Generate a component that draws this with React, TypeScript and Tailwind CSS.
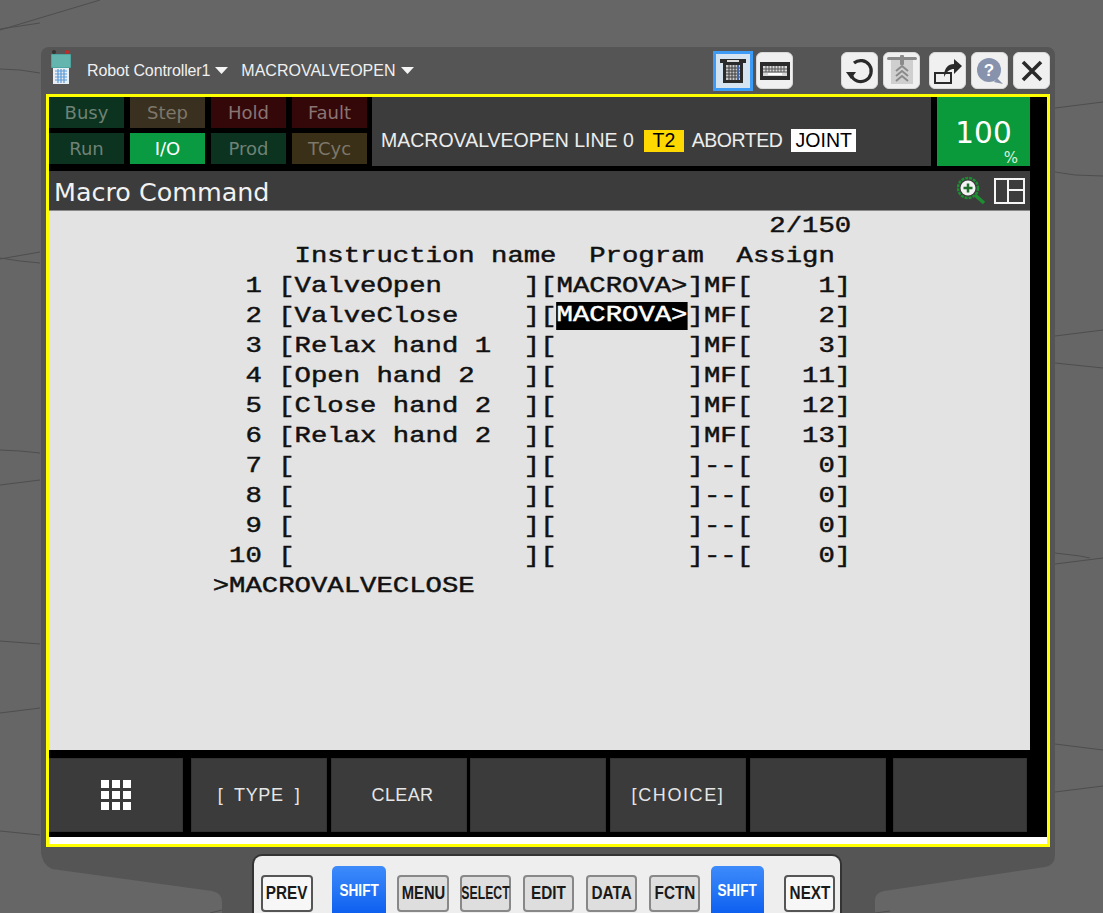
import React from "react";

const uiFont = "font-['DejaVu_Sans',sans-serif]";
const arial = "font-['Liberation_Sans',sans-serif]";

const lights = [
  { label: "Busy", cls: "bg-[#0b3320] text-[#6f8276]" },
  { label: "Step", cls: "bg-[#3a3020] text-[#7d776a]" },
  { label: "Hold", cls: "bg-[#340808] text-[#8a7472]" },
  { label: "Fault", cls: "bg-[#340808] text-[#8a7472]" },
  { label: "Run", cls: "bg-[#0b3320] text-[#6f8276]" },
  { label: "I/O", cls: "bg-[#0a9a42] text-white" },
  { label: "Prod", cls: "bg-[#0b3320] text-[#6f8276]" },
  { label: "TCyc", cls: "bg-[#3a3018] text-[#7d776a]" },
];

const softKeys = [
  { label: "", cls: "w-[134px]" },
  { label: "[  TYPE  ]", cls: "w-[136px] ml-[8px] tracking-[0.6px]" },
  { label: "CLEAR", cls: "w-[136px] ml-[4px] pl-[7px] tracking-[0.4px]" },
  { label: "", cls: "w-[136px] ml-[3px]" },
  { label: "[CHOICE]", cls: "w-[136px] ml-[4px] tracking-[1.6px]" },
  { label: "", cls: "w-[136px] ml-[4px]" },
  { label: "", cls: "w-[134px] ml-[7px]" },
];

const screenRows = [
  "                                            2/150",
  "               Instruction name  Program  Assign",
];

const tableRows = [
  { n: " 1", name: "ValveOpen     ", prog: "MACROVA>", mf: "MF", val: "    1" },
  { n: " 2", name: "ValveClose    ", prog: "MACROVA>", mf: "MF", val: "    2", active: true },
  { n: " 3", name: "Relax hand 1  ", prog: "        ", mf: "MF", val: "    3" },
  { n: " 4", name: "Open hand 2   ", prog: "        ", mf: "MF", val: "   11" },
  { n: " 5", name: "Close hand 2  ", prog: "        ", mf: "MF", val: "   12" },
  { n: " 6", name: "Relax hand 2  ", prog: "        ", mf: "MF", val: "   13" },
  { n: " 7", name: "              ", prog: "        ", mf: "--", val: "    0" },
  { n: " 8", name: "              ", prog: "        ", mf: "--", val: "    0" },
  { n: " 9", name: "              ", prog: "        ", mf: "--", val: "    0" },
  { n: "10", name: "              ", prog: "        ", mf: "--", val: "    0" },
];

function Wires() {
  const lines = [
    "0,30 100,0", "0,29 40,23", "0,69 20,70 40,73", "0,259 40,252", "0,258 20,261 40,263",
    "0,450 20,451 40,453", "0,485 40,480", "0,641 40,644", "0,713 40,708", "0,831 40,835",
    "1055,108 1103,102", "1055,172 1075,175 1103,176", "1055,336 1103,330", "1055,363 1103,368",
    "1055,553 1080,556 1090,558", "1055,564 1103,558", "1055,744 1103,750", "1055,792 1103,786",
    "210,913 222,910", "875,913 890,911",
  ];
  return (
    <svg className="absolute inset-0" width="1103" height="913">
      {lines.map((p) => (
        <polyline key={p} points={p} fill="none" stroke="#4e4e4e" strokeWidth="1" />
      ))}
      <path
        d="M41 850 Q41 864 52 869 L212 891 Q222 893 222 902 L222 913 L875 913 L875 900 Q875 893 884 891 L1045 867 Q1055 865 1055 855 L1055 840 L41 840 Z"
        fill="#555555"
      />
    </svg>
  );
}

function PendantIcon() {
  return (
    <svg width="24" height="36" viewBox="0 0 24 36">
      <circle cx="5" cy="3" r="2" fill="#333" />
      <circle cx="18" cy="3" r="2" fill="#c62828" />
      <rect x="2" y="5" width="20" height="14" rx="1" fill="#4fa6a0" />
      <rect x="3" y="6" width="18" height="12" fill="#63b5ae" />
      <rect x="4" y="19" width="16" height="16" fill="#e8eef2" />
      <path d="M6 22h12M6 25h12M6 28h12M6 31h12M9 20v14M12 20v14M15 20v14" stroke="#5b9bd8" strokeWidth="1.2" />
    </svg>
  );
}

function ToolButton({ children, selected }: { children?: React.ReactNode; selected?: boolean }) {
  if (selected) {
    return (
      <div className="flex h-[40px] w-[40px] items-center justify-center border-[3px] border-[#3d9bf5] bg-[#d5e4f0]">
        {children}
      </div>
    );
  }
  return (
    <div className="flex h-[37px] w-[37px] items-center justify-center rounded-[6px] border border-[#d8d8d8] bg-[#f0f0f0]">
      {children}
    </div>
  );
}

function Caret({ className }: { className?: string }) {
  return (
    <svg className={className} width="13" height="7" viewBox="0 0 13 7">
      <path d="M0 0h13L6.500 7z" fill="#f5f5f5" />
    </svg>
  );
}

function TopBar() {
  return (
    <div className="flex h-[47px] items-center">
      <div className="ml-[3px] mt-[-7px]">
        <PendantIcon />
      </div>
      <span className={`ml-[14px] text-[16px] tracking-[-0.12px] text-[#f0f0f0] ${arial}`}>Robot Controller1</span>
      <Caret className="ml-[5px]" />
      <span className={`ml-[13px] text-[16px] text-[#f0f0f0] ${arial}`}>MACROVALVEOPEN</span>
      <Caret className="ml-[6px]" />
      <div className="ml-auto flex items-center">
        <ToolButton selected>
          <svg width="30" height="30" viewBox="0 0 30 30">
            <path d="M2 3h26v4h-3v20H5V7H2z" fill="#2b2b2b" />
            <rect x="9" y="4" width="12" height="2" fill="#ddd" />
            <rect x="8" y="9" width="14" height="15" fill="#c9c9c9" />
            <path d="M8 12h14M8 15h14M8 18h14M8 21h14M11 9v15M14 9v15M17 9v15" stroke="#3a3a3a" strokeWidth="1" />
            <path d="M20 9v15" stroke="#3f66a8" strokeWidth="2" />
          </svg>
        </ToolButton>
        <div className="ml-[3px]">
          <ToolButton>
            <svg width="30" height="20" viewBox="0 0 30 20">
              <rect x="0" y="1" width="30" height="18" fill="#2b2b2b" />
              <rect x="3" y="5" width="24" height="10" fill="#d8d8d8" />
              <path d="M3 8h24M3 11h24M6 5v6M9 5v6M12 5v6M15 5v6M18 5v6M21 5v6M24 5v6" stroke="#555" strokeWidth="1" />
              <rect x="8" y="12" width="14" height="2" fill="#fff" />
            </svg>
          </ToolButton>
        </div>
        <div className="ml-[48px]">
          <ToolButton>
            <svg width="28" height="28" viewBox="0 0 28 28">
              <path d="M8 6 A10.500 10.500 0 1 1 5 18" fill="none" stroke="#2a2a2a" strokeWidth="3.200" />
              <path d="M0 15h10l-5 7z" fill="#2a2a2a" />
            </svg>
          </ToolButton>
        </div>
        <div className="ml-[5px]">
          <ToolButton>
            <svg width="30" height="32" viewBox="0 0 30 32">
              <rect x="4" y="3" width="22" height="26" fill="#cfcfcf" />
              <rect x="0" y="2" width="30" height="3" rx="1.500" fill="#8a8a8a" />
              <rect x="13" y="0" width="4" height="10" rx="1" fill="#8a8a8a" />
              <path d="M9 16l6-5 6 5M9 21l6-5 6 5M9 26l6-5 6 5" fill="none" stroke="#8a8a8a" strokeWidth="2" />
            </svg>
          </ToolButton>
        </div>
        <div className="ml-[9px]">
          <ToolButton>
            <svg width="30" height="30" viewBox="0 0 30 30">
              <path d="M2 17h16v10H2z" fill="none" stroke="#2a2a2a" strokeWidth="2" />
              <path d="M11 21C11 12 15 8 21 8V3l8 7-8 8v-5c-4 0-7 2-10 8z" fill="#2a2a2a" />
            </svg>
          </ToolButton>
        </div>
        <div className="ml-[5px]">
          <ToolButton>
            <svg width="30" height="30" viewBox="0 0 30 30">
              <circle cx="14" cy="14" r="12" fill="#8792ad" />
              <path d="M22 22l6 6-9-2z" fill="#8792ad" />
              <text x="14" y="20" textAnchor="middle" fontSize="17" fontWeight="700" fill="#fff" fontFamily="Liberation Sans">
                ?
              </text>
            </svg>
          </ToolButton>
        </div>
        <div className="ml-[5px]">
          <ToolButton>
            <svg width="24" height="24" viewBox="0 0 24 24">
              <path d="M3 3l18 18M21 3L3 21" stroke="#2a2a2a" strokeWidth="3.600" />
            </svg>
          </ToolButton>
        </div>
      </div>
    </div>
  );
}

function StatusRow() {
  return (
    <div className="flex h-[69px] pr-[17px]">
      <div className="grid grid-cols-[repeat(4,75px)] grid-rows-[31px_31px] gap-x-[6px] gap-y-[5px]">
        {lights.map((l) => (
          <div key={l.label} className={`flex items-center justify-center text-[18px] ${uiFont} ${l.cls}`}>
            {l.label}
          </div>
        ))}
      </div>
      <div className={`ml-[5px] flex w-[559px] items-center bg-[#3c3c3c] pl-[9px] pt-[18px] text-[19.500px] text-[#ececec] ${arial}`}>
        <span>MACROVALVEOPEN LINE 0</span>
        <span className="ml-[10px] flex h-[22px] w-[40px] items-center justify-center bg-[#ffd800] text-black">T2</span>
        <span className="ml-[8px] tracking-[-0.5px]">ABORTED</span>
        <span className="ml-[9px] flex h-[23px] w-[65px] items-center justify-center bg-white text-black">JOINT</span>
      </div>
      <div className="relative ml-[6px] flex w-[93px] items-center justify-center bg-[#0a9a3c] pt-[3px] text-white">
        <span className={`text-[29.500px] ${uiFont}`}>100</span>
        <span className={`absolute bottom-0 right-[12px] text-[15px] leading-[16px] text-[#d8f0de] ${uiFont}`}>%</span>
      </div>
    </div>
  );
}

function TitleBar() {
  return (
    <div className="mt-[5px] mr-[17px] flex h-[39px] items-center bg-[#3c3c3c] pl-[5px] pr-[5px]">
      <span className={`pt-[4px] text-[25.400px] text-[#f2f2f2] ${uiFont}`}>Macro Command</span>
      <svg className="ml-auto" width="32" height="30" viewBox="0 0 32 30">
        <circle cx="13" cy="12" r="10" fill="none" stroke="#1c8f30" strokeWidth="2.500" strokeDasharray="3 1" />
        <circle cx="13" cy="12" r="7.500" fill="#f3f3f3" />
        <path d="M13 7.500v9M8.500 12h9" stroke="#1e6e2c" strokeWidth="2.500" />
        <path d="M20 19l9 8" stroke="#1c8f30" strokeWidth="3.500" />
      </svg>
      <svg className="ml-[7px]" width="31" height="26" viewBox="0 0 31 26">
        <path d="M1 1h29v24H1zM14 1v24M14 12h16" fill="none" stroke="#f5f5f5" strokeWidth="2" />
      </svg>
    </div>
  );
}

function Screen() {
  return (
    <div className="mr-[17px] h-[540px] overflow-hidden border-t border-[#8a8a8a] bg-[#e3e3e3] pt-[1px]">
      {/* text grid is stretched so a 22px mono font gets the 16.3px cell of the pendant */}
      <pre className="origin-left scale-x-[1.24] font-['Liberation_Mono',monospace] text-[22px] font-normal leading-[30px] text-[#111111] [-webkit-text-stroke:0.45px_#111111]">
        {screenRows.map((r) => (
          <div key={r} className="h-[30px]">{r}</div>
        ))}
        {tableRows.map((r) => (
          <div key={r.n} className="h-[30px]">
            {"           "}
            {r.n}
            {" ["}
            {r.name}
            {"]["}
            {r.active ? (
              <span className="inline-block h-[28px] bg-black align-top leading-[28px] text-white [-webkit-text-stroke:0.45px_#ffffff]">{r.prog}</span>
            ) : (
              r.prog
            )}
            {"]"}
            {r.mf}
            {"["}
            {r.val}
            {"]"}
          </div>
        ))}
        <div className="h-[30px]">{"          >MACROVALVECLOSE"}</div>
      </pre>
    </div>
  );
}

function SoftKeys() {
  return (
    <div className={`mt-[8px] flex h-[74px] whitespace-pre text-[18px] text-[#e6e6e6] ${arial}`}>
      {softKeys.map((k, i) => (
        <div key={i} className={`flex items-center justify-center border border-[#333333] bg-[#3b3b3b] ${k.cls}`}>
          {i === 0 ? (
            <div className="grid grid-cols-[repeat(3,8px)] gap-[3px]">
              {Array.from({ length: 9 }).map((_, j) => (
                <div key={j} className="h-[8px] bg-white" />
              ))}
            </div>
          ) : (
            k.label
          )}
        </div>
      ))}
    </div>
  );
}

const keypad = [
  { label: "PREV", cls: "ml-[7px] w-[52px] border-[#555] bg-[#f7f7f7]", text: "scale-x-[0.85]" },
  { label: "SHIFT", blue: true, cls: "ml-[19px] w-[54px]" },
  { label: "MENU", cls: "ml-[11px] w-[52px] border-[#888] bg-[#dedede]", text: "scale-x-[0.82]" },
  { label: "SELECT", cls: "ml-[11px] w-[51px] border-[#888] bg-[#dedede]", text: "scale-x-[0.68]" },
  { label: "EDIT", cls: "ml-[12px] w-[51px] border-[#888] bg-[#dedede]", text: "scale-x-[0.85]" },
  { label: "DATA", cls: "ml-[12px] w-[51px] border-[#888] bg-[#dedede]", text: "scale-x-[0.85]" },
  { label: "FCTN", cls: "ml-[12px] w-[51px] border-[#888] bg-[#dedede]", text: "scale-x-[0.85]" },
  { label: "SHIFT", blue: true, cls: "ml-[11px] w-[53px]" },
  { label: "NEXT", cls: "ml-[20px] w-[51px] border-[#555] bg-[#f7f7f7]", text: "scale-x-[0.85]" },
];

function Keypad() {
  return (
    <div className={`ml-[252px] flex h-[59px] w-[590px] rounded-t-[10px] border-l-2 border-t-2 border-r-2 border-[#333333] bg-[#eeeeee] ${arial}`}>
      {keypad.map((k, i) =>
        k.blue ? (
          <div
            key={i}
            className={`mt-[10px] flex h-[47px] items-start justify-center rounded-t-[5px] bg-gradient-to-b from-[#3d8bfa] to-[#0d5ff0] pt-[13px] text-[16px] font-bold text-white ${k.cls}`}
          >
            <span className="inline-block scale-x-[0.85]">{k.label}</span>
          </div>
        ) : (
          <div
            key={i}
            className={`mt-[19px] flex h-[37px] items-center justify-center rounded-[4px] border-2 pb-[1px] text-[18px] font-bold text-[#1a1a1a] ${k.cls}`}
          >
            <span className={`inline-block ${k.text}`}>{k.label}</span>
          </div>
        )
      )}
    </div>
  );
}

export default function App() {
  return (
    <main className="relative h-[913px] w-[1103px] overflow-hidden bg-[#666666] pt-[47px]">
      <Wires />
      <div className="relative">
        <div className="ml-[41px] h-[807px] w-[1014px] rounded-t-[8px] bg-[#555555] px-[5px]">
          <TopBar />
          <div className="h-[753px] border-[3px] border-[#ffff00] bg-black">
            <StatusRow />
            <TitleBar />
            <Screen />
            <SoftKeys />
            <div className="mt-[5px] h-[7px] bg-white" />
          </div>
        </div>
        <Keypad />
      </div>
    </main>
  );
}
